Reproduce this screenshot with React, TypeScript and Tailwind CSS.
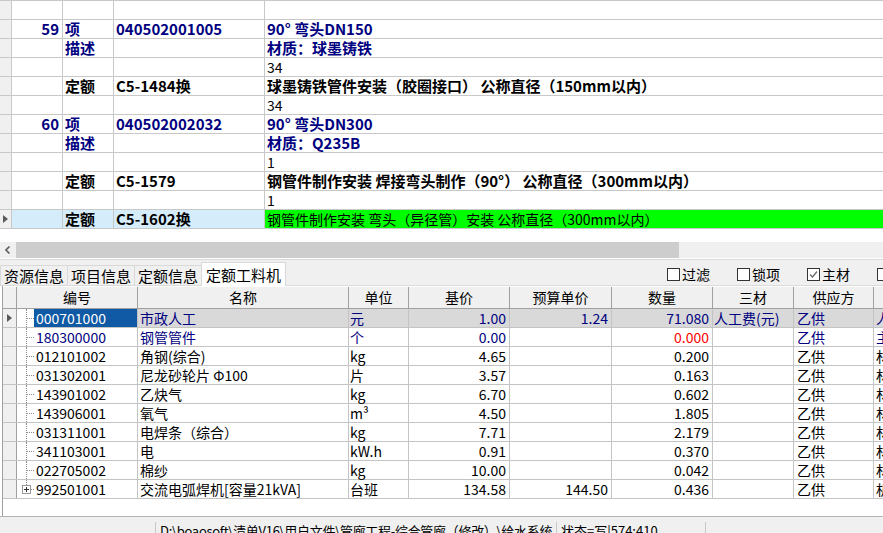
import React from 'react';

type TopKind = 'blank' | 'item' | 'desc' | 'qty' | 'quota' | 'sel';

interface TopRow {
  kind: TopKind;
  num?: string;
  type?: string;
  code?: string;
  text?: string;
}

const topRows: TopRow[] = [
  { kind: 'blank' },
  { kind: 'item', num: '59', type: '项', code: '040502001005', text: '90° 弯头DN150' },
  { kind: 'desc', type: '描述', text: '材质：球墨铸铁' },
  { kind: 'qty', text: '34' },
  { kind: 'quota', type: '定额', code: 'C5-1484换', text: '球墨铸铁管件安装（胶圈接口） 公称直径（150mm以内）' },
  { kind: 'qty', text: '34' },
  { kind: 'item', num: '60', type: '项', code: '040502002032', text: '90° 弯头DN300' },
  { kind: 'desc', type: '描述', text: '材质：Q235B' },
  { kind: 'qty', text: '1' },
  { kind: 'quota', type: '定额', code: 'C5-1579', text: '钢管件制作安装 焊接弯头制作（90°） 公称直径（300mm以内）' },
  { kind: 'qty', text: '1' },
  { kind: 'sel', type: '定额', code: 'C5-1602换', text: '钢管件制作安装 弯头（异径管）安装 公称直径（300mm以内）' },
];

interface Mat {
  code: string;
  name: string;
  unit: string;
  base: string;
  budget: string;
  qty: string;
  sancai: string;
  supply: string;
  kind: string;
}

const mats: Mat[] = [
  { code: '000701000', name: '市政人工', unit: '元', base: '1.00', budget: '1.24', qty: '71.080', sancai: '人工费(元)', supply: '乙供', kind: '人工' },
  { code: '180300000', name: '钢管管件', unit: '个', base: '0.00', budget: '', qty: '0.000', sancai: '', supply: '乙供', kind: '主材' },
  { code: '012101002', name: '角钢(综合)', unit: 'kg', base: '4.65', budget: '', qty: '0.200', sancai: '', supply: '乙供', kind: '材料' },
  { code: '031302001', name: '尼龙砂轮片 Φ100', unit: '片', base: '3.57', budget: '', qty: '0.163', sancai: '', supply: '乙供', kind: '材料' },
  { code: '143901002', name: '乙炔气', unit: 'kg', base: '6.70', budget: '', qty: '0.602', sancai: '', supply: '乙供', kind: '材料' },
  { code: '143906001', name: '氧气', unit: 'm³', base: '4.50', budget: '', qty: '1.805', sancai: '', supply: '乙供', kind: '材料' },
  { code: '031311001', name: '电焊条（综合）', unit: 'kg', base: '7.71', budget: '', qty: '2.179', sancai: '', supply: '乙供', kind: '材料' },
  { code: '341103001', name: '电', unit: 'kW.h', base: '0.91', budget: '', qty: '0.370', sancai: '', supply: '乙供', kind: '材料' },
  { code: '022705002', name: '棉纱', unit: 'kg', base: '10.00', budget: '', qty: '0.042', sancai: '', supply: '乙供', kind: '材料' },
  { code: '992501001', name: '交流电弧焊机[容量21kVA]', unit: '台班', base: '134.58', budget: '144.50', qty: '0.436', sancai: '', supply: '乙供', kind: '机械' },
];

const Tri = () => (
  <svg width="5" height="8" viewBox="0 0 5 8">
    <path d="M0 0 L5 4 L0 8 Z" fill="#5a5a5a" />
  </svg>
);

const TopGridRow = ({ r }: { r: TopRow }) => {
  const sel = r.kind === 'sel';
  const left =
    r.kind === 'item' || r.kind === 'desc'
      ? 'text-[#000080] font-bold'
      : 'text-black font-bold';
  const leftBg = sel ? 'bg-[#d5ecfb]' : '';
  let descCls = 'text-black text-[14px]';
  if (r.kind === 'item' || r.kind === 'desc') descCls = 'text-[#000080] font-bold';
  if (r.kind === 'quota') descCls = 'text-black font-bold';
  if (sel) descCls = 'text-black text-[14px] bg-[#00ff00]';

  return (
    <div className="flex h-[19px] border-b border-[#c8c8c8] leading-[18px] whitespace-nowrap">
      <div className="w-[12px] shrink-0 border-r border-[#c8c8c8] bg-[#f0f0f0] flex items-center justify-center">
        {sel && <Tri />}
      </div>
      <div className={`w-[51px] shrink-0 border-r border-[#c8c8c8] text-right pr-[3px] ${left} ${leftBg}`}>{r.num}</div>
      <div className={`w-[51px] shrink-0 border-r border-[#c8c8c8] pl-[2px] ${left} ${leftBg}`}>{r.type}</div>
      <div className={`w-[151px] shrink-0 border-r border-[#c8c8c8] pl-[2px] ${left} ${leftBg}`}>{r.code}</div>
      <div className={`flex-1 pl-[2px] overflow-hidden ${descCls}`}>{r.text}</div>
    </div>
  );
};

const Check = ({ label, checked }: { label: string; checked?: boolean }) => (
  <div className="flex items-center w-[70px] shrink-0">
    <div className="w-[13px] h-[13px] border border-[#333333] bg-white flex items-center justify-center">
      {checked && (
        <svg width="9" height="9" viewBox="0 0 9 9">
          <path d="M1 4.5 L3.5 7 L8 1.5" fill="none" stroke="#6a6a6a" strokeWidth="1.3" />
        </svg>
      )}
    </div>
    <span className="ml-[2px] text-[14px] leading-[18px] text-black">{label}</span>
  </div>
);

const TreeCell = ({ last }: { last?: boolean }) => (
  <div className="relative w-[17px] shrink-0 bg-white">
    <div
      className={`absolute left-[9px] top-0 border-l border-dotted border-[#8a8a8a] ${last ? 'h-[5px]' : 'h-full'}`}
    />
    <div className="absolute left-[10px] top-[9px] w-[7px] border-t border-dotted border-[#8a8a8a]" />
    {last && (
      <div className="absolute left-[5px] top-[5px] w-[9px] h-[9px] border border-[#9a9a9a] bg-white flex items-center justify-center">
        <svg width="5" height="5" viewBox="0 0 5 5">
          <path d="M0 2.5 H5 M2.5 0 V5" stroke="#333" strokeWidth="1" />
        </svg>
      </div>
    )}
  </div>
);

const MatRow = ({ m, i }: { m: Mat; i: number }) => {
  const sel = i === 0;
  const navy = i < 2;
  const txt = navy ? 'text-[#000080]' : 'text-black';
  const bg = sel ? 'bg-[#d9d9d9]' : 'bg-white';
  const cell = `shrink-0 border-r border-[#c4c4c4] ${bg} ${txt}`;
  return (
    <div className="flex h-[19px] border-b border-[#c4c4c4] leading-[18px] whitespace-nowrap text-[14px]">
      <div className="w-[14px] shrink-0 border-r border-[#a0a0a0] bg-[#f0f0f0] flex items-center justify-center">
        {sel && <Tri />}
      </div>
      <TreeCell last={i === mats.length - 1} />
      <div
        className={`w-[104px] shrink-0 border-r border-[#c4c4c4] pl-[2px] ${
          sel ? 'bg-[#0f59a5] text-white' : `bg-white ${txt}`
        }`}
      >
        {m.code}
      </div>
      <div className={`w-[211px] pl-[2px] ${cell}`}>{m.name}</div>
      <div className={`w-[60px] pl-[1px] ${cell}`}>{m.unit}</div>
      <div className={`w-[101px] pr-[3px] text-right ${cell}`}>{m.base}</div>
      <div className={`w-[102px] pr-[3px] text-right ${cell}`}>{m.budget}</div>
      <div className={`w-[101px] pr-[3px] text-right ${cell} ${i === 1 ? 'text-[#ff0000]' : ''}`}>{m.qty}</div>
      <div className={`w-[81px] pl-[1px] ${cell}`}>{m.sancai}</div>
      <div className={`w-[80px] pl-[3px] ${cell}`}>{m.supply}</div>
      <div className={`flex-1 pl-[2px] overflow-hidden ${bg} ${txt}`}>{m.kind}</div>
    </div>
  );
};

const heads: { label: string; w: string }[] = [
  { label: '编号', w: 'w-[121px]' },
  { label: '名称', w: 'w-[211px]' },
  { label: '单位', w: 'w-[60px]' },
  { label: '基价', w: 'w-[101px]' },
  { label: '预算单价', w: 'w-[102px]' },
  { label: '数量', w: 'w-[101px]' },
  { label: '三材', w: 'w-[81px]' },
  { label: '供应方', w: 'w-[80px]' },
];

export default function App() {
  return (
    <div className="w-[883px] h-[533px] overflow-hidden bg-white flex flex-col font-['Noto_Sans_CJK_SC',sans-serif] text-[15px] text-black select-none">
      {/* upper grid */}
      <div className="shrink-0 border-t border-[#c8c8c8]">
        {topRows.map((r, i) => (
          <TopGridRow key={i} r={r} />
        ))}
      </div>
      <div className="shrink-0 h-[13px] bg-white" />

      {/* horizontal scrollbar */}
      <div className="shrink-0 h-[16px] bg-[#f0f0f0] flex items-center">
        <div className="w-[16px] h-full flex items-center justify-center">
          <svg width="6" height="8" viewBox="0 0 6 8">
            <path d="M4.5 0.5 L1 4 L4.5 7.5" fill="none" stroke="#606060" strokeWidth="1.6" />
          </svg>
        </div>
        <div className="w-[663px] h-full bg-[#cdcdcd]" />
      </div>
      <div className="shrink-0 h-[1px] bg-white" />

      {/* tab bar */}
      <div className="shrink-0 h-[27px] bg-[#f0f0f0] border-t border-[#dadada] flex items-end relative overflow-hidden">
        <div className="absolute left-0 right-0 bottom-0 h-px bg-[#dadada]" />
        {['资源信息', '项目信息', '定额信息'].map((t) => (
          <div
            key={t}
            className="relative w-[68px] h-[21px] shrink-0 border border-b-0 border-[#d9d9d9] -mr-px flex items-center justify-center text-[15px] leading-[18px]"
          >
            {t}
          </div>
        ))}
        <div className="relative w-[85px] h-[24px] shrink-0 bg-white border border-b-0 border-[#d9d9d9] flex items-center justify-center text-[15px] leading-[18px]">
          定额工料机
        </div>
        <div className="self-start pt-[5px] ml-[381px] flex">
          <Check label="过滤" />
          <Check label="锁项" />
          <Check label="主材" checked />
          <Check label="" />
        </div>
      </div>

      {/* lower grid */}
      <div className="shrink-0 h-[230px] ml-[2px] border-l border-[#a0a0a0] bg-white overflow-hidden pt-px">
        <div className="flex h-[22px] border-b border-[#a0a0a0] bg-[#f0f0f0] text-[14px] leading-[20px] whitespace-nowrap">
          <div className="w-[14px] shrink-0 border-r border-[#a0a0a0]" />
          {heads.map((h) => (
            <div key={h.label} className={`${h.w} shrink-0 border-r border-[#a0a0a0] text-center`}>
              {h.label}
            </div>
          ))}
          <div className="flex-1" />
        </div>
        {mats.map((m, i) => (
          <MatRow key={m.code} m={m} i={i} />
        ))}
      </div>

      {/* status bar */}
      <div className="shrink-0 h-[26px] border-t border-[#b4b4b4] bg-[#f0f0f0] flex text-[13px] leading-[18px] pt-[5px] whitespace-nowrap">
        <div className="w-[156px] shrink-0 border-r border-[#c8c8c8]" />
        <div className="w-[401px] shrink-0 border-r border-[#c8c8c8] pl-[4px] overflow-hidden tracking-[-0.3px]">
          {'D:\\boaosoft\\清单V16\\用户文件\\管廊工程-综合管廊（修改）\\给水系统'}
        </div>
        <div className="w-[149px] shrink-0 border-r border-[#c8c8c8] pl-[4px] overflow-hidden">状态=写|574:410</div>
        <div className="flex-1" />
      </div>
    </div>
  );
}
